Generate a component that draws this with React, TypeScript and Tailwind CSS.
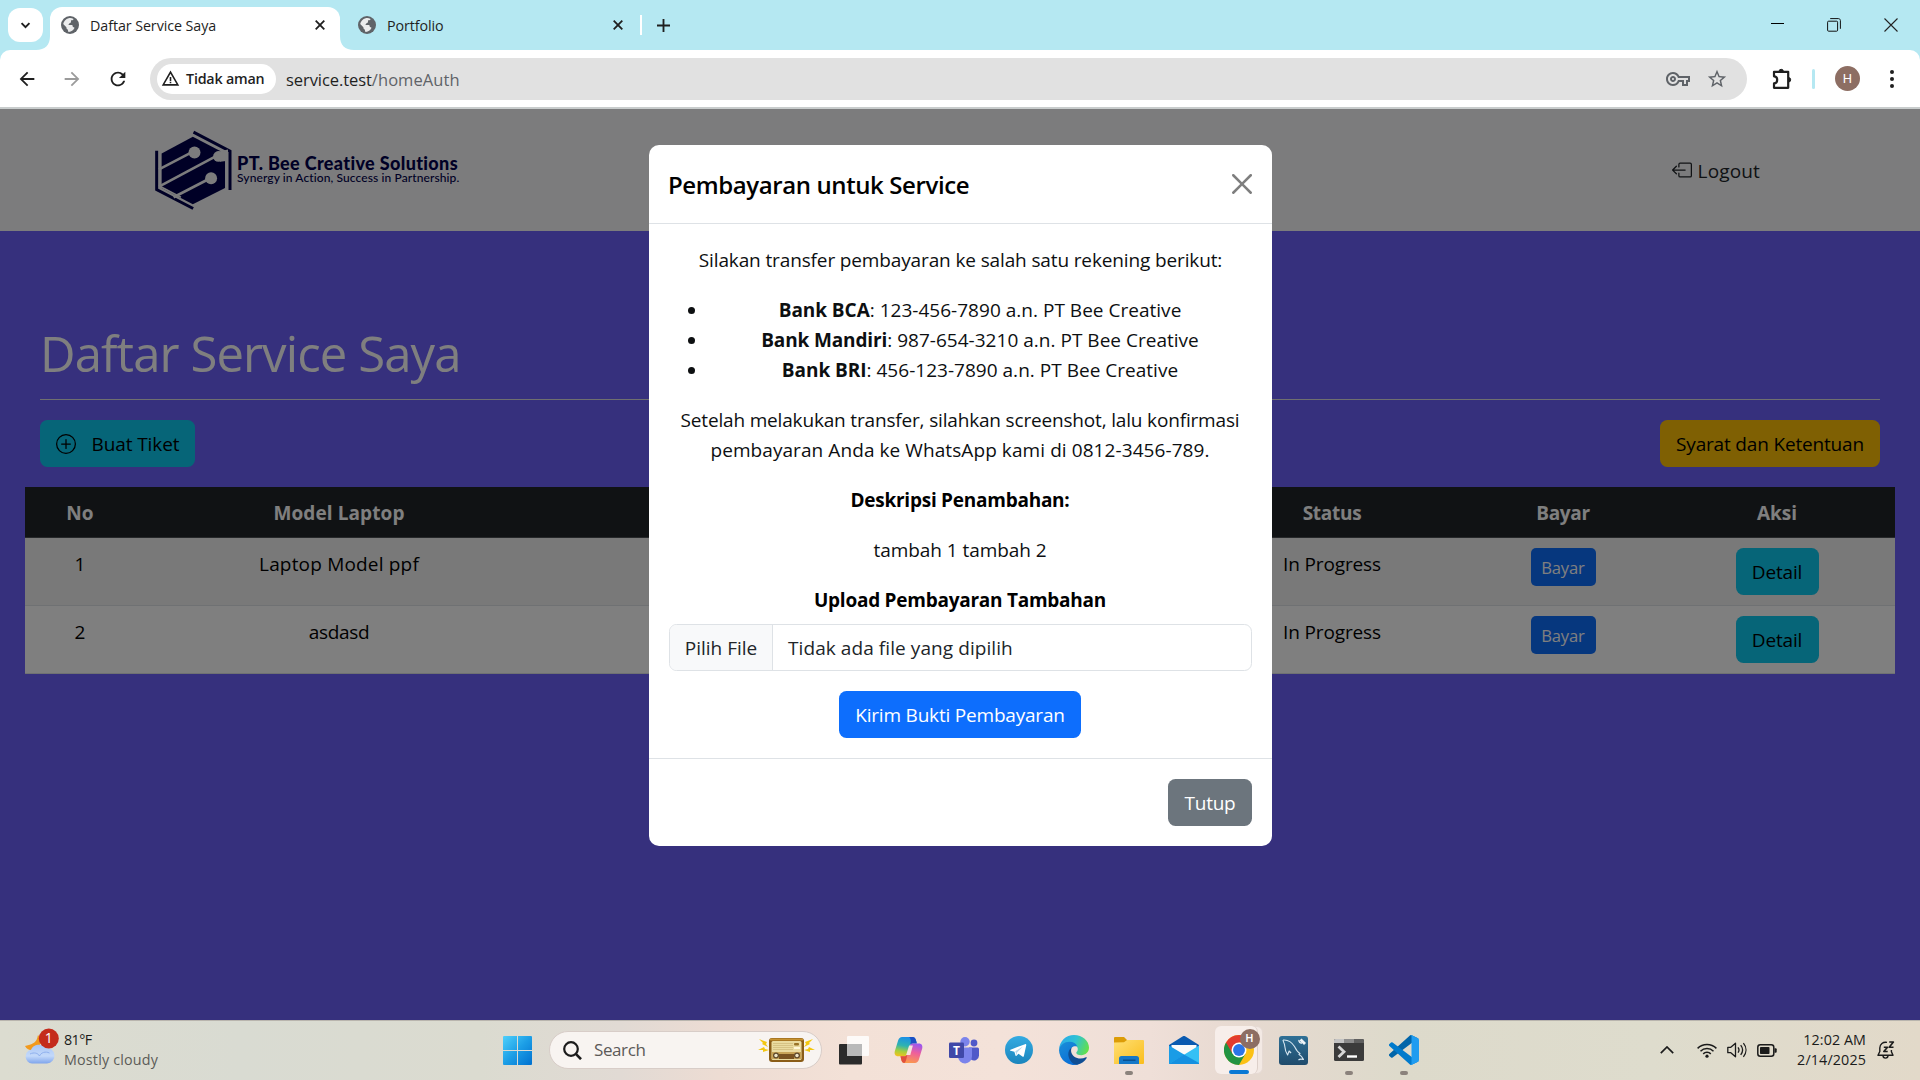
import type { ReactNode } from 'react';
import { BsBoxArrowLeft, BsPlusCircle } from 'react-icons/bs';
import { MdArrowBack, MdArrowForward, MdOutlineVpnKey, MdRefresh, MdStarBorder, MdWarningAmber } from 'react-icons/md';

/* ---------- Browser chrome ---------- */

function Globe() {
  return (
    <svg viewBox="0 0 18 18" className="size-[18px] shrink-0">
      <circle cx="9" cy="9" r="9" fill="#5f6368" />
      <path
        d="M7.6 2.2c1.6-.5 3.6-.2 5 .8-.2.9-.9 1.300-1.900 1.300-.7 0-.9.6-.7 1.100.3.7-.3 1.300-1.200 1.500-.6.1-.4.9-.9 1.200-.6.3-.4 1 .3 1h2.400c.9 0 1.100.7 1.100 1.300s.6.7 1.200.8c.4.1.7.5.4 1a7 7 0 0 1-5.400 3.700c-.7 0-.9-.6-.9-1.300 0-.9-.5-1.200-1.100-1.600-.5-.4-.5-1-.5-1.700L2.200 8.100c.3-2.700 2.600-5.300 5.400-5.900Z"
        fill="#fff"
        fillOpacity=".88"
      />
    </svg>
  );
}

function CloseGlyph() {
  return (
    <svg viewBox="0 0 10 10" className="size-[10px] shrink-0" stroke="#1f1f1f" strokeWidth="1.8">
      <path d="M.7.7l8.600 8.600M9.300.7L.7 9.300" />
    </svg>
  );
}

function Flare({ flip = false }: { flip?: boolean }) {
  return (
    <svg viewBox="0 0 14 14" className={flip ? 'size-[14px] -scale-x-100' : 'size-[14px]'}>
      <path d="M14 0v14H0C9 14 14 9 14 0Z" fill="#fff" />
    </svg>
  );
}

function TabStrip() {
  return (
    <div className="flex h-[50px] bg-[#b5e8f2]">
      <div className="mt-2 ml-2 flex h-[34px] w-[35px] items-center justify-center rounded-[12px] bg-white">
        <svg viewBox="0 0 12 8" className="h-[7px] w-[11px]" fill="none" stroke="#1f1f1f" strokeWidth="2.200">
          <path d="M1.500 1.200L6 5.800l4.500-4.600" />
        </svg>
      </div>
      <div className="-ml-[7px] flex items-end">
        <Flare />
        <div className="flex h-[43px] w-[290px] items-center rounded-t-[12px] bg-white pr-[15px] pb-[7px] pl-[11px]">
          <Globe />
          <span className="ml-[11px] grow pt-[2px] text-[14.3px] tracking-[-0.080px] text-[#1f1f1f]">Daftar Service Saya</span>
          <CloseGlyph />
        </div>
        <Flare flip />
      </div>
      <div className="flex w-[288px] items-center pl-[4px]">
        <Globe />
        <span className="ml-[11px] w-[226px] shrink-0 pt-[2px] text-[14.3px] tracking-[-0.100px] text-[#1f1f1f]">Portfolio</span>
        <CloseGlyph />
        <span className="ml-[17px] h-[20px] w-[2px] shrink-0 bg-white" />
      </div>
      <div className="flex w-[42px] items-center justify-center">
        <svg viewBox="0 0 14 14" className="size-[13px]" stroke="#1f1f1f" strokeWidth="2">
          <path d="M7 0v14M0 7h14" />
        </svg>
      </div>
      <div className="mr-[22px] ml-auto flex items-center gap-[43px] pb-px">
        <svg viewBox="0 0 13 13" className="size-[13px]" stroke="#000" shapeRendering="crispEdges">
          <path d="M0 5.500h13" />
        </svg>
        <svg viewBox="0 0 14 14" className="size-[14px]" fill="none" stroke="#111">
          <rect x=".6" y="3.200" width="10" height="10" rx="1" />
          <path d="M3.200.6h8.300c1 0 1.900.9 1.900 1.900v8.300" />
        </svg>
        <svg viewBox="0 0 14 14" className="size-[14px]" stroke="#222" strokeWidth="1.100">
          <path d="M.5.5l13 13M13.500.5l-13 13" />
        </svg>
      </div>
    </div>
  );
}

function Toolbar() {
  return (
    <div className="bg-[#b5e8f2]">
      <div className="flex h-[57px] items-center rounded-t-[10px] bg-white">
        <div className="flex w-[150px] items-center pl-[16px] text-[22px] text-[#1f1f1f]">
          <MdArrowBack />
          <MdArrowForward className="ml-[23px] text-[#9b9b9b]" />
          <MdRefresh className="ml-[24px]" />
        </div>
        <div className="flex h-[42px] w-[1597px] items-center rounded-full bg-[#e1e1e1] pl-[7px]">
          <div className="flex h-[30px] w-[119px] items-center rounded-full bg-white pl-[4px]">
            <MdWarningAmber className="text-[19px] text-[#1f1f1f]" />
            <span className="ml-[6px] text-[14.300px] font-semibold tracking-[-0.200px] text-[#1f1f1f]">Tidak aman</span>
          </div>
          <span className="ml-[10px] pt-[3px] text-[16.500px] tracking-[-0.070px] text-[#1f1f1f]">
            service.test<span className="tracking-[0.060px] text-[#5f6368]">/homeAuth</span>
          </span>
          <MdOutlineVpnKey className="ml-auto text-[24px] text-[#5f6368]" />
          <MdStarBorder className="mr-[19px] ml-[16px] text-[22px] text-[#5f6368]" />
        </div>
        <svg viewBox="0 0 22 22" className="ml-[24px] size-[22px]" fill="none" stroke="#1f1f1f" strokeWidth="2.200" strokeLinejoin="round">
          <path d="M3 3.800h14.200v16H3v-4.400c2 0 3.200-1.500 3.200-3.600S5 8.300 3 8.300V3.800Z" />
          <path d="M8 3.500a2.200 2.200 0 0 1 4.400 0ZM17.500 9.600a2.200 2.200 0 0 1 0 4.400Z" fill="#1f1f1f" strokeWidth="1" />
        </svg>
        <span className="ml-[19px] h-[20px] w-[3px] rounded bg-[#b5e8f2]" />
        <span className="ml-[20px] flex size-[25px] items-center justify-center rounded-full bg-[#8d6e63] font-[Roboto] text-[13px] text-white">H</span>
        <svg viewBox="0 0 4 18" className="ml-[30px] h-[18px] w-[4px]" fill="#1f1f1f">
          <circle cx="2" cy="2" r="2" />
          <circle cx="2" cy="9" r="2" />
          <circle cx="2" cy="16" r="2" />
        </svg>
      </div>
      <div className="h-[2px] bg-[#c8cccc]" />
    </div>
  );
}

/* ---------- Page ---------- */

function BrandLogo() {
  return (
    <div className="flex items-center text-[#00004c]">
      <svg viewBox="76 60 232 240" className="h-[80px] w-[77px]">
        <path d="M190 80l97 50v104l-97 49-94-49V130Z" fill="currentColor" />
        <path d="M81 122v117l110 57M192 66l110 57v117" fill="none" stroke="currentColor" strokeWidth="9" />
        <g stroke="#f8f9fa" fill="none" strokeWidth="8">
          <path d="M88 178l104-54M88 230l172-92M132 262l112-58" />
          <path d="M92 230l62 32" strokeWidth="5" />
        </g>
        <g fill="#f8f9fa">
          <circle cx="195" cy="127" r="18" />
          <circle cx="267" cy="139" r="16" />
          <path d="M262 126l34-8v34l-24 3Z" />
          <circle cx="245" cy="205" r="18" />
        </g>
      </svg>
      <div className="mb-px ml-[5px] flex flex-col font-[Lato] whitespace-nowrap">
        <span className="text-[18px] leading-[16px] font-black tracking-[0.350px]">PT. Bee Creative Solutions</span>
        <span className="text-[12px] leading-[13px] font-medium tracking-[0.100px]">Synergy in Action, Success in Partnership.</span>
      </div>
    </div>
  );
}

function Button({ className, children }: { className: string; children: ReactNode }) {
  return (
    <button className={`inline-flex h-[47px] items-center justify-center rounded-[7.500px] pt-px text-[19px] whitespace-nowrap ${className}`}>
      {children}
    </button>
  );
}

const tickets = [
  { no: 1, model: 'Laptop Model ppf', tone: 'bg-[#f2f2f2]', tracking: 'tracking-[0.180px]' },
  { no: 2, model: 'asdasd', tone: 'bg-white', tracking: 'tracking-[-0.300px]' },
];

function TicketTable() {
  return (
    <table className="mt-[20px] w-[1870px] table-fixed border-collapse text-center text-[19px] leading-[30px]">
      <colgroup>
        <col className="w-[110px]" />
        <col className="w-[408px]" />
        <col className="w-[654px]" />
        <col className="w-[270px]" />
        <col className="w-[192px]" />
        <col className="w-[236px]" />
      </colgroup>
      <thead>
        <tr className="h-[51px] bg-[#212529] font-bold text-white shadow-[inset_0_-1px_0_#4d5154]">
          <th className="pt-px tracking-[0.140px]">No</th>
          <th className="pt-px tracking-[0.090px]">Model Laptop</th>
          <th />
          <th className="pt-px tracking-[-0.300px]">Status</th>
          <th className="pt-px tracking-[-0.300px]">Bayar</th>
          <th className="pt-px">Aksi</th>
        </tr>
      </thead>
      <tbody>
        {tickets.map((t) => (
          <tr key={t.no} className={`h-[68px] align-top text-black shadow-[inset_0_-1px_0_#dee2e6] ${t.tone}`}>
            <td className="pt-[11px]">{t.no}</td>
            <td className={`pt-[11px] ${t.tracking}`}>{t.model}</td>
            <td />
            <td className="pt-[11px] tracking-[-0.130px]">In Progress</td>
            <td className="pt-[10px]">
              <button className="mx-auto flex h-[38px] w-[65px] items-center justify-center rounded-[5px] bg-[#0d6efd] pt-px text-[16.600px] tracking-[-0.150px] text-white">
                Bayar
              </button>
            </td>
            <td className="pt-[10px] leading-[0]">
              <Button className="w-[83px] bg-[#0dcaf0] leading-[30px] tracking-[-0.150px] text-black">Detail</Button>
            </td>
          </tr>
        ))}
      </tbody>
    </table>
  );
}

function Page() {
  return (
    <>
      <nav className="flex h-[122px] items-center justify-between bg-[#f8f9fa] pr-[160px] pl-[155px]">
        <BrandLogo />
        <span className="flex items-center gap-[6px] text-[19px] text-[#212529]">
          <BsBoxArrowLeft className="text-[20px]" />
          <span className="pt-[3px] tracking-[0.150px]">Logout</span>
        </span>
      </nav>
      <main className="h-[789px] bg-[#6c60fa] px-[25px] pt-[92px]">
        <div className="px-[15px]">
          <h1 className="text-[49px] leading-[60px] tracking-[-0.900px] text-white">Daftar Service Saya</h1>
          <hr className="mt-[16px] border-0 border-t border-[#dedede]" />
          <div className="mt-[20px] flex justify-between">
            <Button className="w-[155px] gap-[16px] bg-[#0dcaf0] tracking-[-0.090px] text-black">
              <BsPlusCircle className="text-[20px]" />
              Buat Tiket
            </Button>
            <Button className="w-[220px] bg-[#ffc107] tracking-[-0.170px] text-black">Syarat dan Ketentuan</Button>
          </div>
        </div>
        <TicketTable />
      </main>
    </>
  );
}

function PaymentModal() {
  return (
    <div className="absolute top-[36px] left-[649px] w-[623px] rounded-[10px] bg-white text-[19px] leading-[30px] text-[#0d0f11]">
      <header className="flex h-[79px] items-center justify-between border-b border-[#dee2e6] pr-[20px] pl-[19px]">
        <h5 className="pt-px text-[24px] font-semibold tracking-[-0.400px] text-black">Pembayaran untuk Service</h5>
        <svg viewBox="0 0 16 16" className="size-[20px] opacity-50">
          <path d="M.293.293a1 1 0 0 1 1.414 0L8 6.586 14.293.293a1 1 0 1 1 1.414 1.414L9.414 8l6.293 6.293a1 1 0 0 1-1.414 1.414L8 9.414l-6.293 6.293a1 1 0 0 1-1.414-1.414L6.586 8 .293 1.707a1 1 0 0 1 0-1.414" />
        </svg>
      </header>
      <section className="flex h-[534px] flex-col px-[20px] pt-[21px] text-center">
        <p className="tracking-[-0.130px]">Silakan transfer pembayaran ke salah satu rekening berikut:</p>
        <ul className="my-[20px] list-disc pl-[39px]">
          <li>
            <strong className="tracking-[-0.050px]">Bank BCA</strong>
            <span className="tracking-[0.020px]">: 123-456-7890 a.n. PT Bee Creative</span>
          </li>
          <li>
            <strong className="tracking-[-0.130px]">Bank Mandiri</strong>
            <span className="tracking-[0.020px]">: 987-654-3210 a.n. PT Bee Creative</span>
          </li>
          <li>
            <strong className="tracking-[-0.050px]">Bank BRI</strong>
            <span className="tracking-[0.020px]">: 456-123-7890 a.n. PT Bee Creative</span>
          </li>
        </ul>
        <p className="pr-px">
          <span className="tracking-[-0.170px]">Setelah melakukan transfer, silahkan screenshot, lalu konfirmasi</span>
          <br />
          <span className="tracking-[0.080px]">pembayaran Anda ke WhatsApp kami di 0812-3456-789.</span>
        </p>
        <strong className="mt-[20px] pr-px tracking-[-0.250px] text-black">Deskripsi Penambahan:</strong>
        <p className="mt-[20px] pr-px tracking-[-0.060px]">tambah 1 tambah 2</p>
        <strong className="mt-[20px] pr-px tracking-[-0.250px] text-black">Upload Pembayaran Tambahan</strong>
        <div className="mt-[9px] flex h-[47px] shrink-0 overflow-hidden rounded-[7.500px] border border-[#dee2e6] text-[#212529]">
          <span className="flex w-[103px] items-center justify-center border-r border-[#dee2e6] bg-[#f8f9fa] pt-px">Pilih File</span>
          <span className="flex items-center pt-px pl-[15px] tracking-[0.080px]">Tidak ada file yang dipilih</span>
        </div>
        <Button className="mt-[20px] mr-px w-[242px] self-center bg-[#0d6efd] tracking-[-0.200px] text-white">Kirim Bukti Pembayaran</Button>
      </section>
      <footer className="flex h-[88px] items-start justify-end border-t border-[#dee2e6] px-[20px] pt-[20px]">
        <Button className="w-[84px] bg-[#6c757d] tracking-[-0.230px] text-white">Tutup</Button>
      </footer>
    </div>
  );
}

/* ---------- Taskbar ---------- */

function Slot({ children, running = false }: { children: ReactNode; running?: boolean }) {
  return (
    <div className="relative flex h-[60px] w-[55px] shrink-0 items-center justify-center pb-px">
      {children}
      {running && <span className="absolute bottom-[6px] h-[4px] w-[8px] rounded-full bg-[#8b827c]" />}
    </div>
  );
}

function WindowsIcon() {
  return (
    <svg viewBox="0 0 29 29" className="size-[29px]">
      <defs>
        <linearGradient id="win" x1="0" y1="0" x2="1" y2="1">
          <stop offset="0" stopColor="#4fd0fb" />
          <stop offset=".5" stopColor="#1c9ee6" />
          <stop offset="1" stopColor="#0070cf" />
        </linearGradient>
      </defs>
      <path d="M1 0h13v14H0V1a1 1 0 0 1 1-1ZM15 0h13a1 1 0 0 1 1 1v13H15ZM0 15h14v14H1a1 1 0 0 1-1-1ZM15 15h14v13a1 1 0 0 1-1 1H15Z" fill="url(#win)" />
    </svg>
  );
}

function RadioIcon() {
  return (
    <svg viewBox="0 0 58 28" className="h-[28px] w-[58px]">
      <g fill="#f3c70f">
        <path d="M2 3l8 3-1 2 2 3-6-3 1-1ZM1 14l6-3 1 2 4 1-6 2 0-2ZM56 3l-8 3 1 2-2 3 6-3-1-1ZM58 14l-6-3-1 2-4 1 6 2 0-2Z" />
      </g>
      <rect x="12" y="2" width="35" height="24" rx="3" fill="#8a5d18" />
      <rect x="12.800" y="2.600" width="33.400" height="2" rx="1" fill="#c79331" />
      <rect x="14.500" y="5" width="30" height="19" rx="1.500" fill="#eadba0" />
      <path d="M16 7.500h20M16 9.500h20M16 11.500h20M16 13.500h20" stroke="#cdb878" strokeWidth=".7" />
      <rect x="37" y="7" width="5" height="2.500" rx="1" fill="#9a7328" />
      <rect x="37" y="11" width="6" height="2" fill="#fff6d8" />
      <path d="M15 16h29.500v7H15Z" fill="#c9a558" />
      <rect x="22" y="18" width="15" height="5" fill="#7a5420" />
      <circle cx="19" cy="19.500" r="3" fill="#5e4a2c" />
      <circle cx="19" cy="19.500" r="1.700" fill="#efe6c8" />
      <circle cx="40" cy="19.500" r="3" fill="#5e4a2c" />
      <circle cx="40" cy="19.500" r="1.700" fill="#efe6c8" />
    </svg>
  );
}

function TaskViewIcon() {
  return (
    <svg viewBox="0 0 30 29" className="h-[29px] w-[30px]">
      <rect x="0" y="8" width="23" height="20.500" rx="1" fill="#2b2b2b" />
      <rect x="8" y="0" width="22" height="20" rx="1" fill="#fff" fillOpacity=".82" />
      <rect x="8" y="8" width="15" height="12" fill="#b9b9b9" />
    </svg>
  );
}

function CopilotIcon() {
  return (
    <svg viewBox="0 0 28 26" className="h-[26px] w-[29px]">
      <defs>
        <linearGradient id="cpA" x1=".5" y1="0" x2=".3" y2="1">
          <stop offset="0" stopColor="#1a8fe8" />
          <stop offset=".45" stopColor="#2fb3b0" />
          <stop offset=".75" stopColor="#a6cf3c" />
          <stop offset="1" stopColor="#f0c21e" />
        </linearGradient>
        <linearGradient id="cpB" x1=".7" y1="0" x2=".4" y2="1">
          <stop offset="0" stopColor="#9a57f0" />
          <stop offset=".45" stopColor="#ee5f9c" />
          <stop offset="1" stopColor="#fb9a4c" />
        </linearGradient>
      </defs>
      <path d="M7.500 0H18c2.200 0 3 1.500 3.700 4l.6 2.500h-4.100c-1.500 0-2.300.8-2.700 2.200L13 16.500c-.6 2-1.800 2.800-3.600 2.800H3.600C.8 19.300-.4 17 .3 14.300L3.600 3.500C4.300 1.200 5.700 0 7.500 0Z" fill="url(#cpA)" />
      <path d="M14.500 0H18c2.200 0 3 1.500 3.700 4l.6 2.500h-4.100c-1.500 0-2.300.8-2.700 2.200C16.500 5 17 2 14.500 0Z" fill="#1b4fc4" />
      <path d="M20.500 26H10c-2.200 0-2.800-1.500-3.400-4L6 19.300h3.400c1.800 0 3-.8 3.600-2.800l2.500-7.800c.4-1.400 1.200-2.200 2.700-2.200h6.200c2.800 0 4 2.300 3.300 5l-3.300 11c-.7 2.300-2.100 3.500-3.900 3.500Z" fill="url(#cpB)" />
      <path d="M6 19.300h3.400c1.800 0 3-.8 3.600-2.800-.8 4-1.200 8-3 9.500-2.200 0-2.800-1.500-3.400-4Z" fill="#e0503c" />
      <path d="M14.600 8.500h3.800l-2.600 9.500h-4.200Z" fill="#f6e4dc" />
    </svg>
  );
}

function TeamsIcon() {
  return (
    <svg viewBox="0 0 30 27" className="h-[27px] w-[30px]">
      <circle cx="25" cy="6" r="3.400" fill="#5059c9" />
      <circle cx="16" cy="4.700" r="4.700" fill="#7b83eb" />
      <path d="M20 10.500h8.500a1.500 1.500 0 0 1 1.500 1.500v6.500a5 5 0 0 1-8 4Z" fill="#5059c9" />
      <path d="M9 10.500h14v8.800a7 7 0 0 1-14 .4Z" fill="#7b83eb" />
      <rect x="0" y="5.500" width="15" height="15.500" rx="1.300" fill="#4048a8" />
      <text x="7.500" y="17.500" textAnchor="middle" fill="#fff" fontSize="12" fontWeight="700" fontFamily="Open Sans, sans-serif">T</text>
    </svg>
  );
}

function TelegramIcon() {
  return (
    <svg viewBox="0 0 28 28" className="size-[28px]">
      <defs>
        <linearGradient id="tg" x1="0" y1="0" x2="0" y2="1">
          <stop offset="0" stopColor="#34abe2" />
          <stop offset="1" stopColor="#1b85bd" />
        </linearGradient>
      </defs>
      <circle cx="14" cy="14" r="14" fill="url(#tg)" />
      <path d="M5.500 13.700L20 8.200c.9-.3 1.500.2 1.200 1.300l-2.300 10.400c-.2.900-.8 1.100-1.500.7l-3.900-2.800-2 1.900c-.5.500-1 .3-1.100-.4l-1-3.500-3.800-1.100c-.9-.3-.9-.7-.1-1Z" fill="#fff" />
      <path d="M10.300 15.300l7.600-4.900-5.800 6.200-.5 2.800Z" fill="#b9d9ec" />
    </svg>
  );
}

function EdgeIcon() {
  return (
    <svg viewBox="0 0 30 30" className="size-[30px]">
      <defs>
        <linearGradient id="edA" x1="0" y1=".3" x2="1" y2=".6">
          <stop offset="0" stopColor="#2aa9ea" />
          <stop offset=".5" stopColor="#2fc2d4" />
          <stop offset="1" stopColor="#63e04a" />
        </linearGradient>
        <linearGradient id="edB" x1="0" y1="0" x2=".6" y2="1">
          <stop offset="0" stopColor="#1b8fd8" />
          <stop offset="1" stopColor="#0a6ed6" />
        </linearGradient>
      </defs>
      <path d="M0 14.500C.5 6 7 0 15 0c8.500 0 15 6 15 12.600 0 4.600-3.500 7.600-7.700 7.600-3.300 0-5-1.200-5-2.400 0-.8 1.500-1.400 1.500-3.700 0-3-3.300-5.600-8-5.600-5 0-8.600 2.500-10.800 6Z" fill="url(#edA)" />
      <path d="M0 15c1-5 5.500-8.200 10.300-8.200 4 0 7 1.900 8 4.800-4-1.600-7.300 1-7.300 5.800 0 6 5 9.800 8.500 11.800A15 15 0 0 1 0 15Z" fill="url(#edB)" />
      <path d="M12.800 12.300C10.500 14 9 17 9.300 19.800 9.800 25.500 14 29.800 18 29.700c4.500-.7 8-3.500 9.700-6.700.3-.6-.2-1-.8-.7-6.700 3.200-13.700-.3-14.700-5.300-.3-1.700 0-3.400.6-4.700Z" fill="#0f4e94" />
    </svg>
  );
}

function ExplorerIcon() {
  return (
    <svg viewBox="0 0 30 27" className="h-[27px] w-[30px]">
      <defs>
        <linearGradient id="fx" x1="0" y1="0" x2="1" y2="1">
          <stop offset="0" stopColor="#ffdf73" />
          <stop offset="1" stopColor="#fabd1c" />
        </linearGradient>
      </defs>
      <path d="M1 0h9l3 3h0v3H0V1a1 1 0 0 1 1-1Z" fill="#dc9c07" />
      <path d="M0 5.500l10-.2 3-2.300h16a1 1 0 0 1 1 1v22a1 1 0 0 1-1 1H0Z" fill="url(#fx)" />
      <path d="M5 27v-5.500A2.500 2.500 0 0 1 7.500 19h15a2.500 2.500 0 0 1 2.500 2.500V27Z" fill="#1678c8" />
      <path d="M9 23.200h12.500" stroke="#0a4d8c" strokeWidth="1.400" />
    </svg>
  );
}

function MailIcon() {
  return (
    <svg viewBox="0 0 30 28" className="h-[28px] w-[30px]">
      <path d="M0 9L13.500.5a2.500 2.500 0 0 1 3 0L30 9v6H0Z" fill="#0a5ab0" />
      <path d="M2.500 9h25v8L15 22 2.500 17Z" fill="#fafafa" />
      <path d="M0 9.500l15 9V28H0Z" fill="#1a9ce6" />
      <path d="M30 9.500L0 28h28.500a1.500 1.500 0 0 0 1.500-1.500Z" fill="#35c0f5" />
      <path d="M0 28l15-9.500L30 27v1Z" fill="#1590e0" />
    </svg>
  );
}

function ChromeIcon() {
  return (
    <div className="relative h-[48px] w-[48px] shrink-0">
      <div className="absolute inset-0 rounded-[6px] border border-[#e6dad4] bg-[#f3e9e4]" />
      <div className="absolute inset-y-0 left-0 w-[43px] rounded-[6px] border-r border-[#ddd0ca] bg-[#f7eeea]" />
      <svg viewBox="0 0 48 48" className="absolute top-[9px] left-[9px] size-[30px]">
        <circle cx="24" cy="24" r="24" fill="#fbc116" />
        <path d="M24 24L3.200 12A24 24 0 0 0 24 48l10.400-18Z" fill="#229342" />
        <path d="M24 0A24 24 0 0 1 44.800 12H24L13.600 30 3.200 12A24 24 0 0 1 24 0Z" fill="#e33b2e" />
        <circle cx="24" cy="24" r="12" fill="#fff" />
        <circle cx="24" cy="24" r="9.500" fill="#2b75e8" />
      </svg>
      <span className="absolute top-[3px] left-[25px] flex size-[20px] items-center justify-center rounded-full bg-[#8d6e63] font-[Roboto] text-[11px] font-medium text-white">
        H
      </span>
      <span className="absolute bottom-0 left-[14px] h-[4px] w-[20px] rounded-full bg-[#0a78d4]" />
    </div>
  );
}

function WorkbenchIcon() {
  return (
    <svg viewBox="0 0 29 29" className="size-[29px]">
      <defs>
        <linearGradient id="wb" x1="0" y1="0" x2="0" y2="1">
          <stop offset="0" stopColor="#2f7096" />
          <stop offset="1" stopColor="#1f4b6c" />
        </linearGradient>
      </defs>
      <rect width="29" height="29" rx="3" fill="url(#wb)" />
      <path d="M4 4c5-.5 9 2.500 11.500 6.500 1.500 3 2.500 5.500 5.500 7l-1 1c2 1 3.500 3 4.500 5-2-.5-4-.5-5 .5M4 4c.3 2 1.200 3 1.600 5 .3 3 .4 6 3 10l1.500-4 2 2" fill="none" stroke="#d6e6f0" strokeWidth="1.100" strokeLinejoin="round" />
      <path d="M21.500 3.500l4.500 4.500" stroke="#eef4f8" strokeWidth="2.800" />
      <path d="M20 4a2.500 2.500 0 0 0 3 3" fill="none" stroke="#eef4f8" strokeWidth="1.400" />
    </svg>
  );
}

function TerminalIcon() {
  return (
    <svg viewBox="0 0 30 22" className="h-[22px] w-[30px]">
      <rect width="30" height="22" rx="1.500" fill="#3b3b3b" />
      <path d="M1.500 0H10v4H0V1.500A1.500 1.500 0 0 1 1.500 0Z" fill="#c4c4c4" />
      <path d="M10 0h10v4H10Z" fill="#8c8c8c" />
      <path d="M20 0h8.500A1.500 1.500 0 0 1 30 1.500V4H20Z" fill="#5f5f5f" />
      <path d="M4.500 7.500l5.500 5.300-5.500 5.300" fill="none" stroke="#d6d6d6" strokeWidth="2.800" />
      <path d="M13 17.500h10" stroke="#fff" strokeWidth="2.400" />
    </svg>
  );
}

function VsCodeIcon() {
  return (
    <svg viewBox="0 0 100 100" className="size-[30px]">
      <path d="M96.500 10.800L75.900.9a6.200 6.200 0 0 0-7.100 1.200L1.300 63.600a4.200 4.200 0 0 0 0 6.200l5.500 5a4.200 4.200 0 0 0 5.300.2L93.400 13.400c2.700-2.100 6.600-.1 6.600 3.300v-.2c0-2.400-1.400-4.600-3.500-5.700Z" fill="#0065a9" />
      <path d="M96.500 89.200l-20.600 9.900a6.200 6.200 0 0 1-7.100-1.200L1.300 36.400a4.200 4.200 0 0 1 0-6.200l5.500-5a4.200 4.200 0 0 1 5.300-.2l81.300 61.600c2.700 2.100 6.600.1 6.600-3.300v.2c0 2.400-1.400 4.600-3.500 5.700Z" fill="#007acc" />
      <path d="M75.900 99.100a6.200 6.200 0 0 1-7.100-1.200c2.300 2.300 6.200.7 6.200-2.600V4.700c0-3.300-3.900-4.900-6.200-2.600A6.200 6.200 0 0 1 75.900.9l20.600 9.900c2.100 1 3.500 3.200 3.500 5.600v67.200c0 2.400-1.400 4.600-3.500 5.600Z" fill="#1f9cf0" />
    </svg>
  );
}

function WeatherIcon() {
  return (
    <svg viewBox="0 0 34 36" className="mb-[9px] h-[36px] w-[34px] shrink-0">
      <defs>
        <linearGradient id="cl" x1="0" y1="0" x2="0" y2="1">
          <stop offset="0" stopColor="#a9c6f6" />
          <stop offset=".6" stopColor="#c3d9fa" />
          <stop offset="1" stopColor="#7fa5ec" />
        </linearGradient>
      </defs>
      <path d="M13 7c-1 4-1 9-13 11 2 4 6 5 10 4l8-9Z" fill="#f29a1d" />
      <path d="M7 35.500a7 7 0 0 1-1-13.800A8.500 8.500 0 0 1 20.500 20a7.800 7.800 0 1 1 1.500 15.500Z" fill="url(#cl)" />
      <path d="M5 26c4-2 8-1 9.500 2 1.500-3.500 6-5 10-3" fill="none" stroke="#8fb0ee" strokeWidth="1" />
      <circle cx="23.800" cy="10.500" r="10" fill="#c42b1c" />
      <text x="23.800" y="15.300" textAnchor="middle" fill="#fff" fontSize="14" fontFamily="Open Sans, sans-serif">1</text>
    </svg>
  );
}

function Tray() {
  return (
    <div className="mr-[25px] ml-auto flex items-center pb-px text-[#1b1b1b]">
      <svg viewBox="0 0 14 8" className="h-[8px] w-[14px]" fill="none" stroke="currentColor" strokeWidth="1.700">
        <path d="M.8 7.200L7 1l6.200 6.200" />
      </svg>
      <svg viewBox="0 0 20 15" className="ml-[23px] h-[15px] w-[20px]" fill="none" stroke="currentColor" strokeWidth="1.500">
        <path d="M.6 5.400a13.300 13.300 0 0 1 18.800 0M3.500 8.200a9.200 9.200 0 0 1 13 0M6.200 10.900a5.400 5.400 0 0 1 7.600 0" />
        <circle cx="10" cy="13.200" r="1.600" fill="currentColor" stroke="none" />
      </svg>
      <svg viewBox="0 0 20 16" className="ml-[10px] h-[16px] w-[20px]" fill="none" stroke="currentColor" strokeWidth="1.300" strokeLinejoin="round">
        <path d="M.8 5.300h3L8.500 1.200v13.600l-4.700-4.100h-3Z" />
        <path d="M11 5.300c1.200 1.600 1.200 3.800 0 5.400M13.700 3.200c2.300 2.900 2.300 6.700 0 9.600M16.400 1.200c3.400 4.100 3.400 9.500 0 13.600" />
      </svg>
      <svg viewBox="0 0 20 13" className="ml-[10px] h-[13px] w-[20px]">
        <rect x=".8" y=".8" width="16" height="11.400" rx="2.500" fill="none" stroke="currentColor" strokeWidth="1.500" />
        <rect x="3" y="3" width="9.500" height="7" rx=".8" fill="currentColor" />
        <path d="M17.500 4.200h1.200a1 1 0 0 1 1 1v2.600a1 1 0 0 1-1 1h-1.200Z" fill="currentColor" />
      </svg>
      <div className="ml-[14px] flex w-[75px] flex-col pb-px text-right text-[14.300px] leading-[20px]">
        <span className="tracking-[0.080px]">12:02 AM</span>
        <span className="tracking-[0.130px]">2/14/2025</span>
      </div>
      <svg viewBox="0 0 18 18" className="ml-[11px] h-[18px] w-[18px]" fill="none" stroke="currentColor" strokeWidth="1.400" strokeLinejoin="round">
        <path d="M10 1.400C6 .6 2.800 3.300 2.800 7v3.500L1 14.300h15l-1.600-3.600V9M6 14.600a2.500 2.500 0 0 0 5 0" />
        <path d="M6.800 6.300h3.700l-3.700 4.200h3.900M12.200 1h4.200l-4.200 5.200h4.300" strokeWidth="1.600" />
      </svg>
    </div>
  );
}

function Taskbar() {
  return (
    <footer className="flex h-[60px] items-center border-t border-[#b9b5ae] bg-[linear-gradient(90deg,#dcdcd0_0px,#d9dbd2_240px,#dbdbd0_480px,#e1dad4_620px,#eddcd3_720px,#f3e1d7_850px,#f4e2d9_1000px,#efdfd8_1150px,#e6d9d0_1250px,#dddacb_1400px,#dedccd_1650px,#e2d9c9_1920px)]">
      <div className="flex w-[490px] items-center pb-px pl-[25px]">
        <WeatherIcon />
        <div className="ml-[5px] flex flex-col text-[14.300px] leading-[20px]">
          <span className="tracking-[-0.590px] text-[#1b1b1b]">81°F</span>
          <span className="tracking-[0.190px] text-[#5c5c58]">Mostly cloudy</span>
        </div>
      </div>
      <Slot>
        <WindowsIcon />
      </Slot>
      <div className="mr-[4px] mb-px ml-[4px] flex h-[38px] w-[273px] shrink-0 items-center rounded-full border border-[#d8cdc8] bg-[#f8f4f1] pr-[6px] pl-[13px]">
        <svg viewBox="0 0 19 19" className="size-[19px]" fill="none" stroke="#1b1b1b" strokeWidth="2.200">
          <circle cx="8" cy="8" r="6.800" />
          <path d="M12.800 12.800l5.200 5.400" strokeWidth="2.600" />
        </svg>
        <span className="ml-[12px] grow text-[17px] tracking-[-0.400px] text-[#5c5a58]">Search</span>
        <RadioIcon />
      </div>
      <Slot><TaskViewIcon /></Slot>
      <Slot><CopilotIcon /></Slot>
      <Slot><TeamsIcon /></Slot>
      <Slot><TelegramIcon /></Slot>
      <Slot><EdgeIcon /></Slot>
      <Slot running><ExplorerIcon /></Slot>
      <Slot><MailIcon /></Slot>
      <Slot><ChromeIcon /></Slot>
      <Slot><WorkbenchIcon /></Slot>
      <Slot running><TerminalIcon /></Slot>
      <Slot running><VsCodeIcon /></Slot>
      <Tray />
    </footer>
  );
}

export default function App() {
  return (
    <div className="flex h-[1080px] w-[1920px] flex-col overflow-hidden font-['Open_Sans',sans-serif]">
      <TabStrip />
      <Toolbar />
      <div className="relative h-[911px]">
        <Page />
        <div className="absolute inset-0 bg-black/50" />
        <PaymentModal />
      </div>
      <Taskbar />
    </div>
  );
}
